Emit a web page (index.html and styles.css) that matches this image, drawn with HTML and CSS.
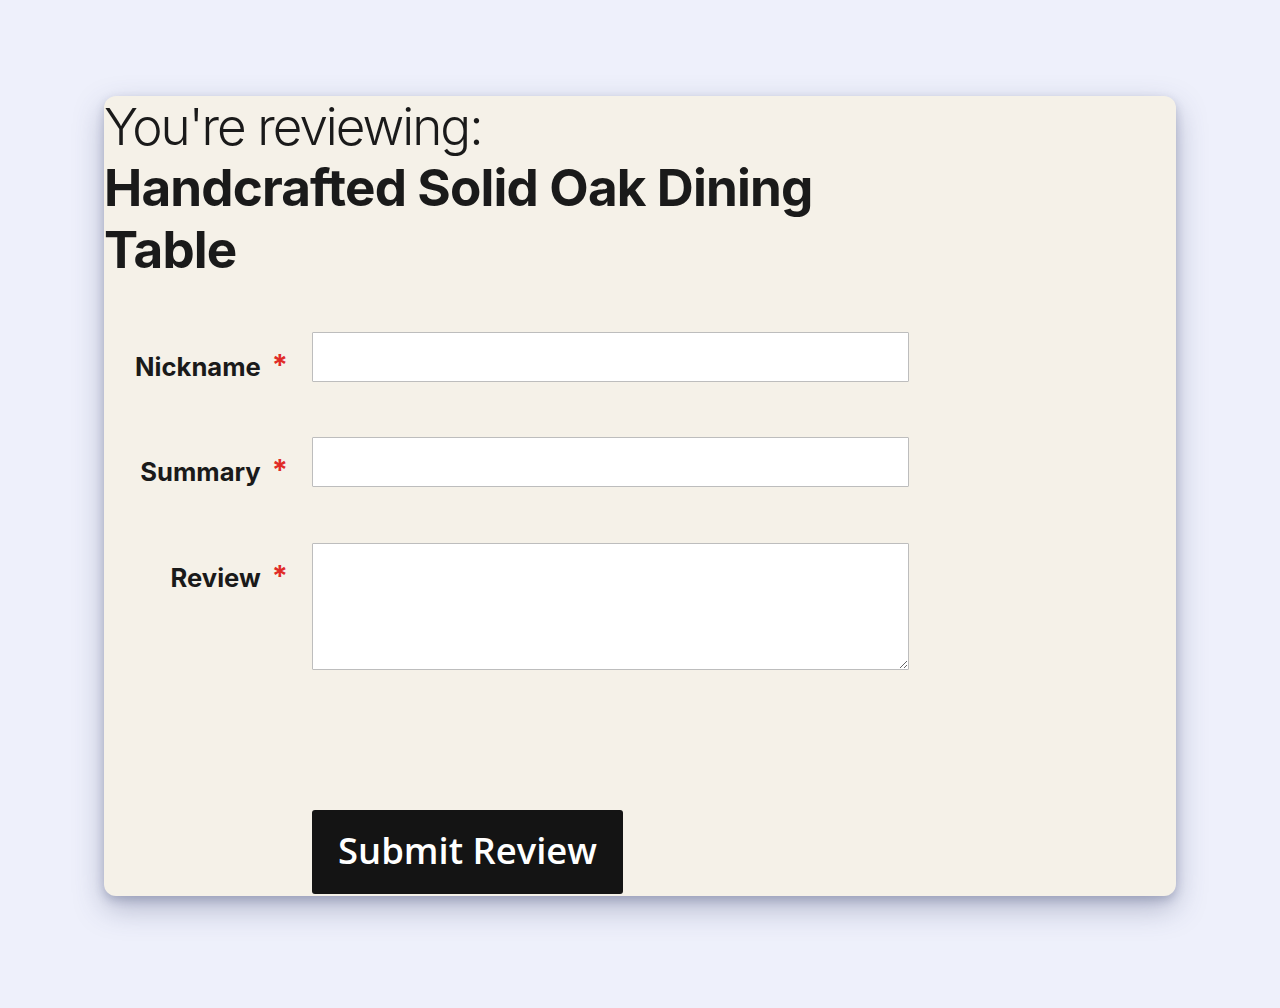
FILE: index.html
```html
<!DOCTYPE html>
<html lang="en">
<head>
<meta charset="utf-8">
<title>Write a review</title>
<link rel="stylesheet" href="styles.css">
</head>
<body>
<div class="card">
  <h1 class="title">
    <span class="title-intro">You're reviewing:</span>
    <span class="title-product">Handcrafted Solid Oak Dining Table</span>
  </h1>
  <form class="review-form">
    <div class="field field-nickname">
      <label class="label required" for="nickname">Nickname</label>
      <input class="control" id="nickname" type="text">
    </div>
    <div class="field field-summary">
      <label class="label required" for="summary">Summary</label>
      <input class="control" id="summary" type="text">
    </div>
    <div class="field field-review">
      <label class="label required" for="review">Review</label>
      <textarea class="control area" id="review"></textarea>
    </div>
    <div class="actions">
      <button class="submit" type="button">Submit Review</button>
    </div>
  </form>
</div>
</body>
</html>
```

FILE: styles.css
```css
html, body {
  margin: 0;
  padding: 0;
}
body {
  background: #eef0fb;
  padding: 96px 104px;
  font-family: Inter, "Noto Sans", sans-serif;
  color: #1a1a1a;
}
.card {
  width: 1072px;
  height: 800px;
  box-sizing: border-box;
  background: #f5f1e8;
  border-radius: 12px;
  overflow: hidden;
  box-shadow: 0 12px 30px rgba(60, 66, 110, 0.34), 0 4px 10px rgba(60, 66, 110, 0.24);
}
.title {
  margin: 0;
  max-width: 760px;
  font-size: 51.2px;
  line-height: 1.2;
  color: #1a1a1a;
}
.title-intro {
  display: block;
  font-weight: 300;
  letter-spacing: -2px;
}
.title-product {
  display: block;
  font-weight: 700;
  letter-spacing: -0.85px;
}
.review-form {
  margin-top: 52px;
}
.field {
  display: grid;
  grid-template-columns: 208px 597px;
  align-items: start;
}
.field-nickname {
  margin-bottom: 55px;
}
.field-summary {
  margin-bottom: 56px;
}
.field-review {
  margin-bottom: 140px;
}
.label {
  padding-top: 20px;
  padding-right: 24px;
  text-align: right;
  font-size: 25.6px;
  line-height: 30px;
  font-weight: 700;
  color: #1a1a1a;
}
.required::after {
  content: "*";
  color: #e02b27;
  margin-left: 11px;
  font-size: 29px;
  line-height: 0;
  position: relative;
  top: -1px;
}
.control {
  box-sizing: border-box;
  width: 597px;
  height: 50px;
  margin: 0;
  border: 1px solid #bdbdbd;
  background: #fff;
  border-radius: 1px;
  font: inherit;
  font-size: 18px;
  padding: 0 10px;
}
.area {
  height: 127px;
  resize: vertical;
  padding: 10px;
}
.actions {
  padding-left: 208px;
}
.submit {
  font-family: "Open Sans", sans-serif;
  font-size: 36.4px;
  font-weight: 600;
  line-height: 49px;
  padding: 15.5px 26px 19.5px;
  background: #141414;
  color: #fff;
  border: 0;
  border-radius: 3px;
  cursor: pointer;
}
```
